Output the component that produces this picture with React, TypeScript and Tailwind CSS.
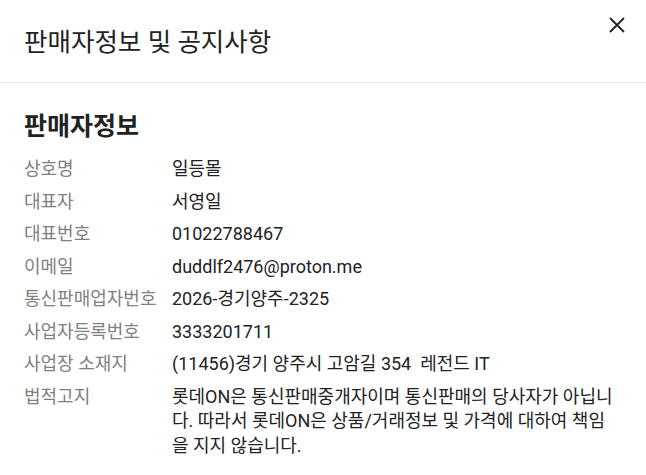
const rows: [string, string][] = [
  ["상호명", "일등몰"],
  ["대표자", "서영일"],
  ["대표번호", "01022788467"],
  ["이메일", "duddlf2476@proton.me"],
  ["통신판매업자번호", "2026-경기양주-2325"],
  ["사업자등록번호", "3333201711"],
  ["사업장 소재지", "(11456)경기 양주시 고암길 354  레전드 IT"],
  [
    "법적고지",
    "롯데ON은 통신판매중개자이며 통신판매의 당사자가 아닙니다. 따라서 롯데ON은 상품/거래정보 및 가격에 대하여 책임을 지지 않습니다.",
  ],
];

export default function App() {
  return (
    <div
      className="w-[646px] h-[475px] bg-white overflow-hidden"
      style={{ fontFamily: 'Roboto, "Noto Sans CJK KR", sans-serif' }}
    >
      <div className="relative h-[83px] border-b border-[#ebebeb] flex items-center pl-[24px]">
        <h1 className="text-[25.5px] leading-[34px] text-[#222] mt-[1px]">판매자정보 및 공지사항</h1>
        <button className="absolute right-[21px] top-[17px] w-[16px] h-[16px] text-[#222]">
          <svg viewBox="0 0 16 16" width="16" height="16" fill="none" stroke="currentColor" strokeWidth="1.8">
            <path d="M1 1 L15 15 M15 1 L1 15" />
          </svg>
        </button>
      </div>
      <div className="px-[24px] pt-[27px]">
        <h2 className="text-[25px] leading-[34px] font-bold text-[#222] mb-[13px]">판매자정보</h2>
        <div className="flex flex-col gap-[8px]">
          {rows.map(([label, value]) => (
            <div key={label} className="flex text-[18px] leading-[24.5px]">
              <div className="w-[148px] shrink-0 text-[#808080]">{label}</div>
              <div className="w-[446px] text-[#222] whitespace-pre-wrap">{value}</div>
            </div>
          ))}
        </div>
      </div>
    </div>
  );
}
